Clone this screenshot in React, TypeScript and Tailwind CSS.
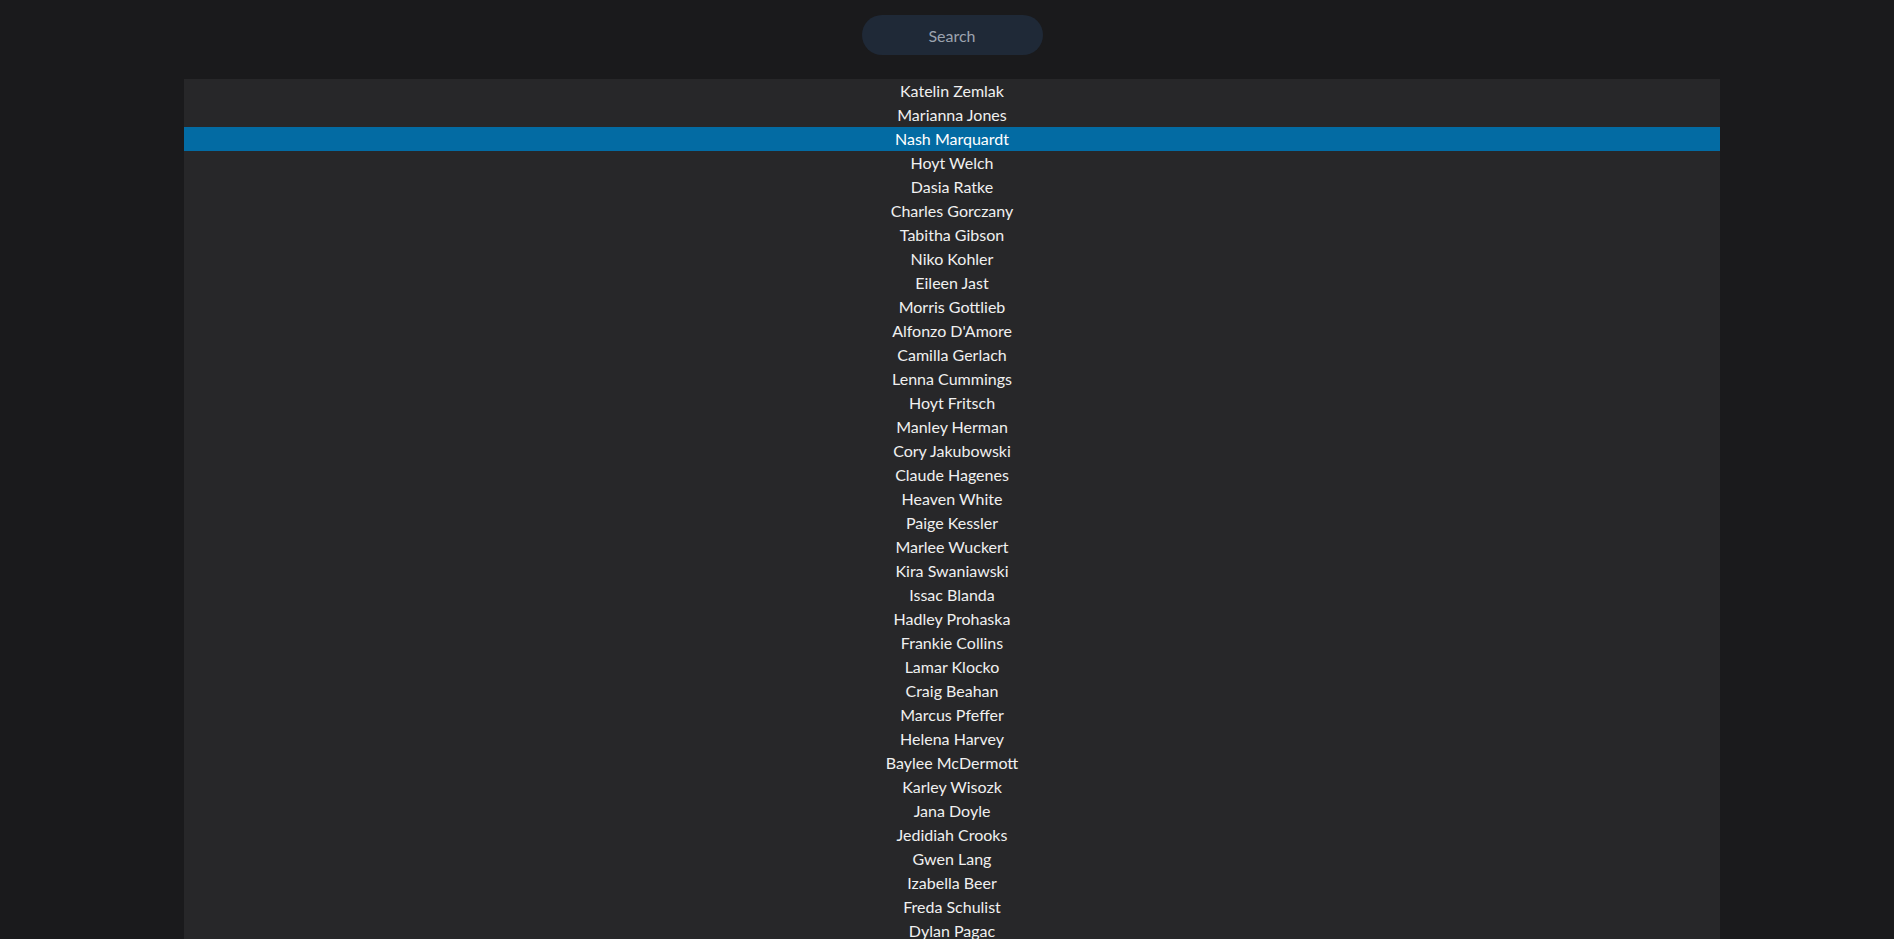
const names = [
  "Katelin Zemlak",
  "Marianna Jones",
  "Nash Marquardt",
  "Hoyt Welch",
  "Dasia Ratke",
  "Charles Gorczany",
  "Tabitha Gibson",
  "Niko Kohler",
  "Eileen Jast",
  "Morris Gottlieb",
  "Alfonzo D'Amore",
  "Camilla Gerlach",
  "Lenna Cummings",
  "Hoyt Fritsch",
  "Manley Herman",
  "Cory Jakubowski",
  "Claude Hagenes",
  "Heaven White",
  "Paige Kessler",
  "Marlee Wuckert",
  "Kira Swaniawski",
  "Issac Blanda",
  "Hadley Prohaska",
  "Frankie Collins",
  "Lamar Klocko",
  "Craig Beahan",
  "Marcus Pfeffer",
  "Helena Harvey",
  "Baylee McDermott",
  "Karley Wisozk",
  "Jana Doyle",
  "Jedidiah Crooks",
  "Gwen Lang",
  "Izabella Beer",
  "Freda Schulist",
  "Dylan Pagac",
  "Rosa Bartell",
  "Emmett Lind",
];

export default function App() {
  return (
    <div className="h-screen overflow-hidden bg-[#1a1a1c] font-['Lato','Noto_Sans',sans-serif] text-[16px]">
      <div className="flex justify-center pt-[15px] pb-[24px] pl-[10px]">
        <input
          type="text"
          placeholder="Search"
          className="h-[40px] w-[181px] rounded-full bg-[#1f2937] text-center text-[#f0f0f0] placeholder:text-[#9ca3af] outline-none"
        />
      </div>
      <ul className="ml-[184px] mr-[174px] bg-[#272729]">
        {names.map((n, i) => (
          <li
            key={i}
            className={
              i === 2
                ? "h-[24px] leading-[24px] text-center text-white bg-[#036ba3]"
                : "h-[24px] leading-[24px] text-center text-[#f0f0f0]"
            }
          >
            {n}
          </li>
        ))}
      </ul>
    </div>
  );
}
